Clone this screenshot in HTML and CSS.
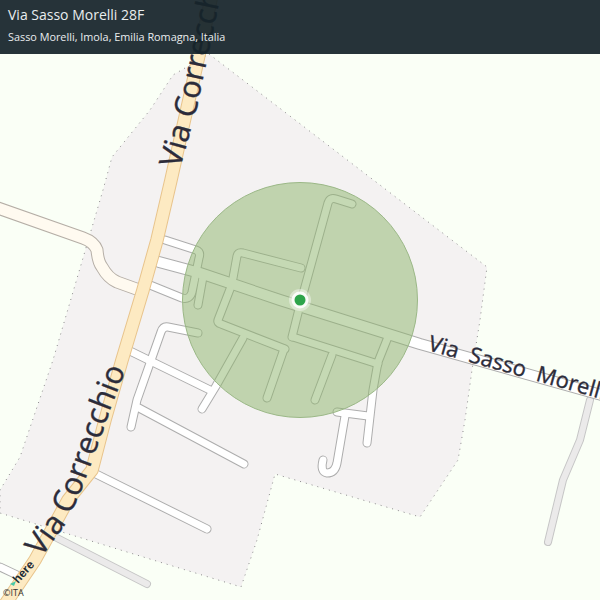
FILE: index.html
```html
<!DOCTYPE html>
<html lang="it">
<head>
<meta charset="utf-8">
<title>Via Sasso Morelli 28F</title>
<link rel="stylesheet" href="styles.css">
</head>
<body>
<div class="page">
  <svg class="map" viewBox="0 0 600 600" width="600" height="600" aria-hidden="true">
    <defs>
      <path id="lbl-corr-1" d="M41 558 L65 525 L80 494 L93 459 L112 405 L132 354"/>
      <path id="lbl-corr-2" d="M180 169 L197 107 L226 -30"/>
      <path id="lbl-sasso" d="M427 350 L612 402"/>
      <g id="minor">
        <path d="M165 240 L196 250 Q201 252 199 258 L192 292 Q190 300 182 298 L150 285"/>
        <path d="M0 567 L17 575"/>
        <path d="M203 277 L198 305"/>
        <path d="M292 337 L300 305 L328 203 Q330 197 336 199 L352 204"/>
        <path d="M233 278 L237 256 Q238 252 243 253 L301 268"/>
        <path d="M232 284 L218 320 Q217 323 221 324 L285 349"/>
        <path d="M293 337 L378 364"/>
        <path d="M243 338 L216 386 L202 409"/>
        <path d="M284 349 L267 398"/>
        <path d="M332 355 L315 400"/>
        <path d="M388 337 L378 362 L373 390 L367 443"/>
        <path d="M337 412 L368 416"/>
        <path d="M345 416 L337 463 Q335 473 327 473 Q320 472 323 460"/>
        <path d="M198 333 L168 327 Q163 326 161 332 L137 400 L131 427"/>
        <path d="M130 351 L212 391"/>
        <path d="M139 408 L244 464"/>
        <path d="M92 472 L207 529"/>
      </g>
      <path id="main-road" d="M159 262 L200 273 L280 300 L420 344 L612 398"/>
      <path id="side-road" d="M-5 207 L83 238 Q94 242 97 250 Q98 262 102 267 Q108 278 117 282 L142 291"/>
      <path id="track" d="M57 538 L147 584 M590 400 L580 440 L563 480 L548 542"/>
      <path id="highway" d="M213 -10 L199 55 L171 180 L157 240 L143 290 L122 360 L105 420 L92 470 L68 500 L35 560 L8 600 L0 612"/>
    </defs>
    <rect class="land" width="600" height="600"/>
    <path class="area" d="M209 54 L487 267 L480 320 L472 370 L465 420 L458 460 L420 517 L275 474 L257 540 L241 587 L0 513 L0 490 L20 457 L53 360 L103 190 L112 157 L150 110 L173 75 Z"/>

    <use href="#track" class="line track-case"/>
    <use href="#track" class="line track-fill"/>
    <use href="#side-road" class="line side-case"/>
    <use href="#side-road" class="line side-fill"/>
    <use href="#minor" class="line road-case"/>
    <use href="#main-road" class="line main-case"/>
    <use href="#minor" class="line road-fill"/>
    <use href="#main-road" class="line main-fill"/>
    <use href="#highway" class="line hw-case"/>
    <use href="#highway" class="line hw-fill"/>

    <circle class="radius" cx="300" cy="300" r="117.500"/>
    <circle class="pin-halo-outer" cx="300" cy="300" r="11"/>
    <circle class="pin-halo" cx="300" cy="300" r="8.500"/>
    <circle class="pin" cx="300" cy="300" r="5.500"/>

    <text class="label label-big"><textPath href="#lbl-corr-1">Via Correcchio</textPath></text>
    <text class="label label-big"><textPath href="#lbl-corr-2">Via Correcchio</textPath></text>
    <text class="label label-mid"><textPath href="#lbl-sasso">Via  Sasso  Morelli</textPath></text>
    <text class="here" transform="translate(18 584) rotate(-48)">here</text>
    <path class="here-mark" d="M10 584 L16 581 L14 586 Z"/>
    <text class="copyright" x="3" y="596">©ITA</text>
  </svg>
  <header class="bar">
    <h1 class="bar-title">Via Sasso Morelli 28F</h1>
    <p class="bar-sub">Sasso Morelli, Imola, Emilia Romagna, Italia</p>
  </header>
</div>
</body>
</html>
```
FILE: styles.css
```css
html, body { margin: 0; padding: 0; }
body { width: 600px; height: 600px; overflow: hidden; background: #fafff6; }
.page { position: relative; width: 600px; height: 600px; overflow: hidden; }
.map { position: absolute; inset: 0; display: block; }
.bar {
  position: relative;
  box-sizing: border-box;
  height: 54px;
  padding: 6px 8px 0;
  background: rgba(22, 35, 42, .93);
  color: #e9edef;
  font-family: "Open Sans", "Noto Sans", sans-serif;
}
.bar-title { margin: 0; font-size: 14px; line-height: 18px; font-weight: 400; }
.bar-sub { margin: 5px 0 0; font-size: 10.85px; line-height: 15px; }
.land { fill: #fafff6; }
.area { fill: #f4f2f2; stroke: #8a8a8a; stroke-width: 1; stroke-dasharray: 1 5; }
.line { fill: none; stroke-linecap: round; stroke-linejoin: round; }
.road-case { stroke: #adadad; stroke-width: 9; }
.road-fill { stroke: #ffffff; stroke-width: 7; }
.main-case { stroke: #adadad; stroke-width: 12; }
.main-fill { stroke: #ffffff; stroke-width: 10; }
.side-case { stroke: #b5aea6; stroke-width: 13; }
.side-fill { stroke: #fffaf0; stroke-width: 11; }
.track-case { stroke: #c6c6c6; stroke-width: 8; }
.track-fill { stroke: #ebeaea; stroke-width: 6; }
.hw-case { stroke: #e8c48c; stroke-width: 13.500; }
.hw-fill { stroke: #fdeac2; stroke-width: 11.500; }
.radius { fill: #8bb46a; fill-opacity: .5; stroke: #9bb887; stroke-width: 1; }
.pin-halo-outer { fill: #ffffff; fill-opacity: .4; }
.pin-halo { fill: #ffffff; fill-opacity: .85; }
.pin { fill: #2da44a; }
.label { font-family: "Open Sans", "Noto Sans", sans-serif; fill: #2c2c3a; stroke: #2c2c3a; stroke-width: .35px; white-space: pre; }
.label-big { font-size: 31px; }
.label-mid { font-size: 22px; }
.here { font-family: "Liberation Sans", sans-serif; font-weight: 700; font-size: 12px; fill: #1d2b34; }
.here-mark { fill: #48c9a8; }
.copyright { font-family: "Open Sans", sans-serif; font-size: 9px; fill: #333333; }
```
